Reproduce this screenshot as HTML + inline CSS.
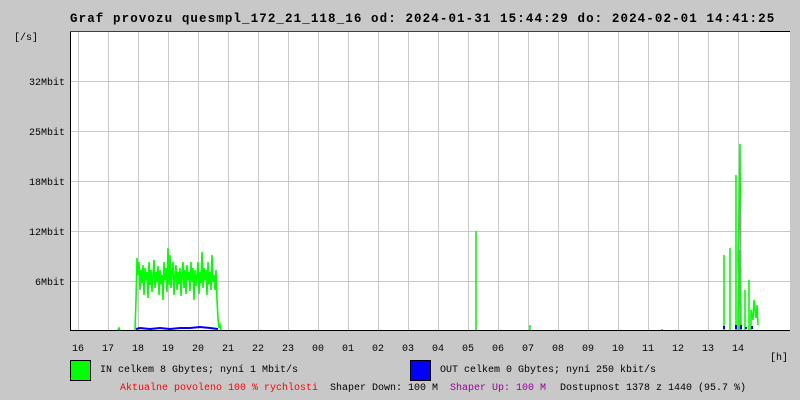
<!DOCTYPE html>
<html><head><meta charset="utf-8"><style>
body{margin:0;background:#c8c8c8;width:800px;height:400px;overflow:hidden}
svg{display:block}
text{font-family:"Liberation Mono","DejaVu Sans Mono",monospace;font-size:10px;fill:#000}
</style></head><body>
<svg width="800" height="400" viewBox="0 0 800 400">
<rect width="800" height="400" fill="#c8c8c8"/>
<text x="70" y="22" style="font-size:12.5px;font-weight:bold;letter-spacing:1.1px">Graf provozu quesmpl_172_21_118_16 od: 2024-01-31 15:44:29 do: 2024-02-01 14:41:25</text>
<rect x="70" y="31" width="720" height="299" fill="#fff"/>
<g stroke="#c8c8c8" stroke-width="1">
<path d="M78.5 31V330M108.5 31V330M138.5 31V330M168.5 31V330M198.5 31V330M228.5 31V330M258.5 31V330M288.5 31V330M318.5 31V330M348.5 31V330M378.5 31V330M408.5 31V330M438.5 31V330M468.5 31V330M498.5 31V330M528.5 31V330M558.5 31V330M588.5 31V330M618.5 31V330M648.5 31V330M678.5 31V330M708.5 31V330M738.5 31V330"/>
<path d="M70 81.5H790M70 131.5H790M70 181.5H790M70 231.5H790M70 281.5H790"/>
</g>
<path d="M70.5 31V330.5H790" stroke="#000" fill="none"/>
<path d="M70 31.5H760" stroke="#d00000"/>
<path d="M760 31.5H790" stroke="#000"/>
<g fill="none" stroke="#00ff00" stroke-width="1.6">
<path d="M118 330L119 328L120 330M135 330L136 300L137 258L138 275L139 262L140 290L141 270L142 283L143 265L144 295L145 268L146 280L147 272L148 298L149 262L150 285L151 270L152 292L153 275L154 260L155 288L156 272L157 282L158 266L159 295L160 270L161 284L162 275L163 300L164 262L165 280L166 268L167 292L168 248L169 285L170 255L171 288L172 270L173 262L174 295L175 275L176 265L177 290L178 272L179 284L180 268L181 296L182 275L183 262L184 288L185 270L186 294L187 265L188 280L189 272L190 291L191 262L192 282L193 268L194 300L195 270L196 286L197 276L198 262L199 294L200 272L201 283L202 252L203 288L204 268L205 280L206 270L207 295L208 262L209 284L210 272L211 290L212 255L213 282L214 275L215 290L216 270L217 300L218 318L219 328L220 325L221 330"/>
<path d="M476 330V231M530 330V325M741 330L738 260L739 215L740 144L741 330M724 330V255M730 330V248M736 330V175M738 330L739 250M745 330V290M749 330V280M751 330L751 310L753 320L754 300L756 318L757 305L758 325M662 330V329"/>
</g>
<path d="M740 330V215M739.5 330L741 200" stroke="#999" fill="none"/>
<g fill="none" stroke="#0000ff" stroke-width="2">
<path d="M136 329L140 328L150 329L160 328L170 329L180 328L190 328L200 327L210 328L218 329M724 329V326M736 329V325M741 329V325M746 329V327M752 329V326M758 329"/>
</g>
<g>
<text x="14" y="40">[/s]</text>
<text x="65" y="85" text-anchor="end">32Mbit</text>
<text x="65" y="135" text-anchor="end">25Mbit</text>
<text x="65" y="185" text-anchor="end">18Mbit</text>
<text x="65" y="235" text-anchor="end">12Mbit</text>
<text x="65" y="285" text-anchor="end">6Mbit</text>
</g>
<g text-anchor="middle">
<text x="78" y="351">16</text><text x="108" y="351">17</text><text x="138" y="351">18</text><text x="168" y="351">19</text><text x="198" y="351">20</text><text x="228" y="351">21</text><text x="258" y="351">22</text><text x="288" y="351">23</text><text x="318" y="351">00</text><text x="348" y="351">01</text><text x="378" y="351">02</text><text x="408" y="351">03</text><text x="438" y="351">04</text><text x="468" y="351">05</text><text x="498" y="351">06</text><text x="528" y="351">07</text><text x="558" y="351">08</text><text x="588" y="351">09</text><text x="618" y="351">10</text><text x="648" y="351">11</text><text x="678" y="351">12</text><text x="708" y="351">13</text><text x="738" y="351">14</text>
</g>
<text x="770" y="360">[h]</text>
<rect x="70.5" y="360.5" width="20" height="20" fill="#00ff00" stroke="#000"/>
<text x="100" y="372">IN celkem 8 Gbytes; nyní 1 Mbit/s</text>
<rect x="410.5" y="360.5" width="20" height="20" fill="#0000ff" stroke="#000"/>
<text x="440" y="372">OUT celkem 0 Gbytes; nyní 250 kbit/s</text>
<text x="120" y="390" style="fill:#ff0000">Aktualne povoleno 100 % rychlosti</text>
<text x="330" y="390">Shaper Down: 100 M</text>
<text x="450" y="390" style="fill:#990099">Shaper Up: 100 M</text>
<text x="560" y="390">Dostupnost 1378 z 1440 (95.7 %)</text>
</svg>
</body></html>
